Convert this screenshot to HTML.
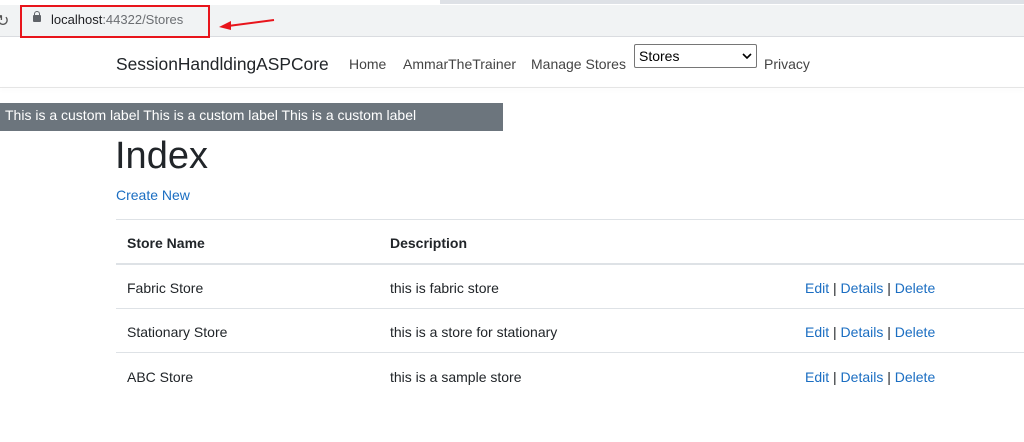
<!DOCTYPE html>
<html><head><style>
body{margin:0;width:1024px;height:442px;overflow:hidden;background:#fff;font-family:"Liberation Sans",sans-serif;color:#212529;position:relative}
.a{position:absolute;white-space:nowrap}
.link{color:#1b6ec2}
</style></head><body>
<div class="a" style="left:0;top:0;width:1024px;height:5px;background:#fff"></div>
<div class="a" style="left:440px;top:0;width:584px;height:4px;background:#dee1e6"></div>
<div class="a" style="left:0;top:5px;width:1024px;height:32px;background:#f1f3f4"></div>
<div class="a" style="left:0;top:36px;width:1024px;height:1px;background:#dadce0"></div>
<div class="a" style="left:-4px;top:11px;font-size:16px;color:#555">&#8635;</div>
<div class="a" style="left:20px;top:5px;width:186px;height:29px;border:2px solid #e8141b"></div>
<div class="a" style="left:33px;top:15px;width:8px;height:7px;background:#5f6368;border-radius:1px"></div>
<div class="a" style="left:34px;top:11px;width:4px;height:5px;border:1px solid #5f6368;border-bottom:none;border-radius:3px 3px 0 0"></div>
<div class="a" style="left:51px;top:12px;font-size:13px;color:#202124">localhost<span style="color:#6b6e72">:44322/Stores</span></div>
<svg class="a" style="left:216px;top:16px" width="60" height="14"><line x1="58" y1="4" x2="12" y2="10" stroke="#e8141b" stroke-width="2"/><polygon points="3,11 15,5 15,14" fill="#e8141b"/></svg>
<div class="a" style="left:0;top:87px;width:1024px;height:1px;background:#e5e5e5;box-shadow:0 2px 4px rgba(0,0,0,.06)"></div>
<div class="a" style="left:116px;top:54px;font-size:17.4px;color:#212529">SessionHandldingASPCore</div>
<div class="a" style="left:349px;top:56px;font-size:14px;color:#444">Home</div>
<div class="a" style="left:403px;top:56px;font-size:14px;color:#444">AmmarTheTrainer</div>
<div class="a" style="left:531px;top:56px;font-size:14px;color:#444">Manage Stores</div>
<div class="a" style="left:634px;top:44px;width:121px;height:22px;border:1px solid #767676;border-radius:2px;font-size:14px;color:#000"><span style="position:absolute;left:4px;top:3px">Stores</span><svg style="position:absolute;right:4px;top:8px" width="10" height="6"><polyline points="1,1 5,5 9,1" fill="none" stroke="#000" stroke-width="1.6"/></svg></div>
<div class="a" style="left:764px;top:56px;font-size:14px;color:#444">Privacy</div>
<div class="a" style="left:0;top:103px;width:503px;height:28px;background:#6c757d"></div>
<div class="a" style="left:5px;top:107px;font-size:14px;color:#fff">This is a custom label This is a custom label This is a custom label</div>
<div class="a" style="left:115px;top:135px;font-size:38px;font-weight:500;color:#212529">Index</div>
<div class="a link" style="left:116px;top:187px;font-size:14px">Create New</div>
<div class="a" style="left:116px;top:219px;width:908px;height:1px;background:#dee2e6"></div>
<div class="a" style="left:116px;top:263px;width:908px;height:2px;background:#dee2e6"></div>
<div class="a" style="left:116px;top:308px;width:908px;height:1px;background:#dee2e6"></div>
<div class="a" style="left:116px;top:352px;width:908px;height:1px;background:#dee2e6"></div>
<div class="a" style="left:127px;top:235px;font-size:14px;font-weight:bold">Store Name</div>
<div class="a" style="left:390px;top:235px;font-size:14px;font-weight:bold">Description</div>
<div class="a" style="left:127px;top:280px;font-size:14px">Fabric Store</div>
<div class="a" style="left:390px;top:280px;font-size:14px">this is fabric store</div>
<div class="a" style="left:805px;top:280px;font-size:14px"><span class="link">Edit</span> | <span class="link">Details</span> | <span class="link">Delete</span></div>
<div class="a" style="left:127px;top:324px;font-size:14px">Stationary Store</div>
<div class="a" style="left:390px;top:324px;font-size:14px">this is a store for stationary</div>
<div class="a" style="left:805px;top:324px;font-size:14px"><span class="link">Edit</span> | <span class="link">Details</span> | <span class="link">Delete</span></div>
<div class="a" style="left:127px;top:369px;font-size:14px">ABC Store</div>
<div class="a" style="left:390px;top:369px;font-size:14px">this is a sample store</div>
<div class="a" style="left:805px;top:369px;font-size:14px"><span class="link">Edit</span> | <span class="link">Details</span> | <span class="link">Delete</span></div>
</body></html>
